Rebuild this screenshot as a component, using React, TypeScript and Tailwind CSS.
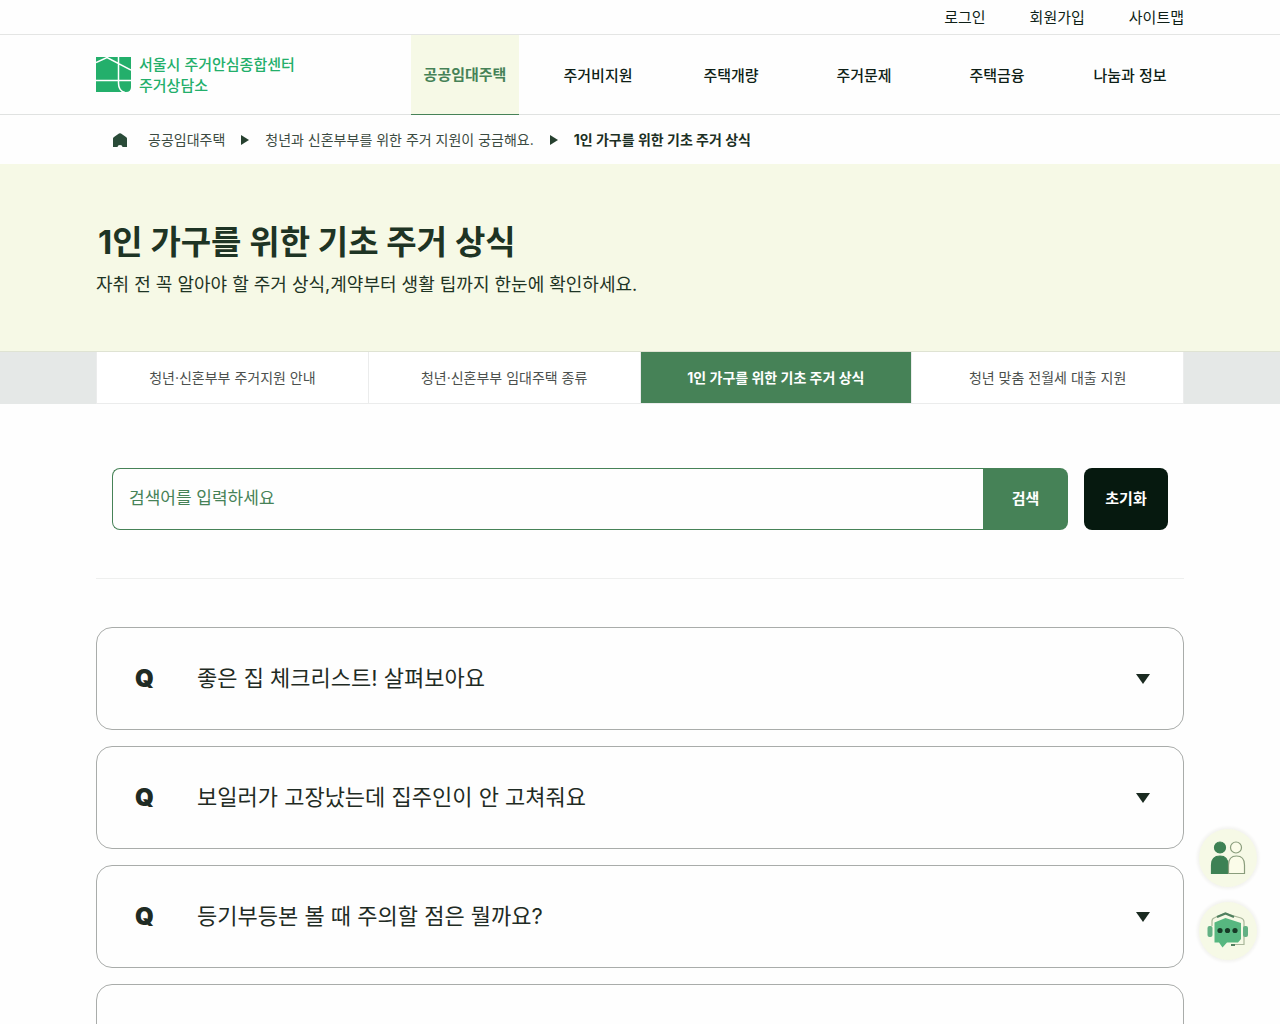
import React, { useState } from 'react';

const utilityLinks = ['로그인', '회원가입', '사이트맵'];

const menuItems = ['공공임대주택', '주거비지원', '주택개량', '주거문제', '주택금융', '나눔과 정보'];

const tabs = [
  '청년·신혼부부 주거지원 안내',
  '청년·신혼부부 임대주택 종류',
  '1인 가구를 위한 기초 주거 상식',
  '청년 맞춤 전월세 대출 지원',
];

const questions = [
  '좋은 집 체크리스트! 살펴보아요',
  '보일러가 고장났는데 집주인이 안 고쳐줘요',
  '등기부등본 볼 때 주의할 점은 뭘까요?',
  '',
];

const Logo: React.FC = () => (
  <a href="#" className="flex items-center gap-2 text-[#23af6b]">
    <svg viewBox="0 0 35 35" className="h-[35px] w-[35px]">
      <path d="M0 0H35V30Q35 35 30 35H0Z" fill="currentColor" />
      <path d="M0 5.500L11 0.500L35 13M22.500 0V26Q22.500 34 29 35.500M0 23.500H35" fill="none" stroke="#fff" strokeWidth="1.500" />
    </svg>
    <span className="text-[15px] leading-[21px] font-medium">
      서울시 주거안심종합센터
      <br />
      주거상담소
    </span>
  </a>
);

const CrumbArrow: React.FC = () => (
  <svg viewBox="0 0 8 10" className="h-[10px] w-2 shrink-0" fill="#26402f">
    <path d="M0 0L8 5L0 10Z" />
  </svg>
);

const PeopleIcon: React.FC = () => (
  <svg viewBox="0 0 36 34" className="h-[34px] w-9" strokeWidth="1.200">
    <g fill="#3d8154" stroke="#3d8154">
      <circle cx="10" cy="6.500" r="5.500" />
      <path d="M1.500 32.500V24Q1.500 15 10 15Q18 15 18 24V32.500Z" />
    </g>
    <g fill="#fbfce9" stroke="#8a9d7c">
      <circle cx="26" cy="6.500" r="5.500" />
      <path d="M18.500 32.500V24Q18.500 15 26.500 15Q34.500 15 34.500 24V32.500Z" />
    </g>
  </svg>
);

const ChatIcon: React.FC = () => (
  <svg viewBox="0 0 42 38" className="h-[38px] w-[42px]">
    <path d="M5 14V9Q5 6.500 8 5.500L18 1.500L34 6Q37 7 37 10V32.500H24" fill="none" stroke="#a9b79a" strokeWidth="1.200" />
    <rect x="0.500" y="14" width="5" height="11" rx="2" fill="#63b184" />
    <rect x="36" y="14" width="5" height="11" rx="2" fill="#63b184" />
    <path d="M10 5L18.500 1.500L27 5" fill="none" stroke="#50805f" strokeWidth="2.200" />
    <path d="M24 33H28" stroke="#50805f" strokeWidth="2" />
    <path d="M7.500 10.500L18.500 6L34 11V27L31 30.500H20L15.500 35.500L12 30.500H7.500Z" fill="#57b780" />
    <g fill="#173a26">
      <circle cx="13" cy="18.500" r="2.600" />
      <circle cx="20.500" cy="18.500" r="2.600" />
      <circle cx="28" cy="18.500" r="2.600" />
    </g>
  </svg>
);

const App: React.FC = () => {
  const [keyword, setKeyword] = useState('');

  return (
    <div className="min-h-screen bg-[#fefefe] font-['Inter','Noto_Sans_CJK_KR',sans-serif] text-[15px] text-[#0f1f17]">
      <div className="border-b border-[#e4e5e4]">
        <div className="mx-auto flex h-[34px] max-w-7xl items-center justify-end gap-11 px-24 pt-0.5">
          {utilityLinks.map((label) => (
            <a key={label} href="#">{label}</a>
          ))}
        </div>
      </div>

      <header className="border-b border-[#e0e2e1]">
        <div className="mx-auto flex h-[79px] max-w-7xl items-center justify-between px-24">
          <Logo />
          <nav className="-mb-px flex h-20 gap-[25px] font-medium">
            {menuItems.map((label, i) => (
              <a
                key={label}
                href="#"
                className={`flex w-[108px] items-center justify-center pt-0.5 whitespace-nowrap ${
                  i === 0 ? 'border-b border-[#468257] bg-[#f6f9e6] font-bold text-[#468257]' : ''
                }`}
              >
                {label}
              </a>
            ))}
          </nav>
        </div>
      </header>

      <nav className="mx-auto flex h-[49px] max-w-7xl items-center gap-4 px-28 text-[14px] text-[#3b4a41]">
        <a href="#" aria-label="홈" className="mr-1">
          <svg viewBox="0 0 16 14" className="h-[14px] w-4" fill="#2a4b38">
            <path d="M1 5.500Q1 4.500 2 4L7 0.500Q8 0 9 0.500L14 4Q15 4.500 15 5.500V14H10.500Q10.500 12 8 12Q5.500 12 5.500 14H1Z" />
          </svg>
        </a>
        <a href="#">공공임대주택</a>
        <CrumbArrow />
        <a href="#">청년과 신혼부부를 위한 주거 지원이 궁금해요.</a>
        <CrumbArrow />
        <strong className="font-bold text-[#1c2f24]">1인 가구를 위한 기초 주거 상식</strong>
      </nav>

      <section className="border-b border-[#dfe3d3] bg-[#f6f9e6]">
        <div className="mx-auto h-[187px] max-w-7xl px-24 pt-[55px] text-[#1e3424]">
          <h1 className="pl-0.5 text-[33px] leading-[46px] font-bold">1인 가구를 위한 기초 주거 상식</h1>
          <p className="mt-1 text-[18px] leading-8">
            자취 전 꼭 알아야 할 주거 상식,계약부터 생활 팁까지 한눈에 확인하세요.
          </p>
        </div>
      </section>

      <div className="bg-[#e5e8e7]">
        <div className="mx-auto max-w-7xl px-24">
          <nav className="grid h-[52px] grid-cols-4 border-b border-l border-[#ebecec] bg-white text-[14px] text-[#4b504d]">
            {tabs.map((label, i) => (
              <a
                key={label}
                href="#"
                className={`flex items-center justify-center border-r border-[#ebecec] ${
                  i === 2 ? 'bg-[#468257] font-bold text-white' : ''
                }`}
              >
                {label}
              </a>
            ))}
          </nav>
        </div>
      </div>

      <main className="mx-auto max-w-7xl px-24 pt-16">
        <form className="flex gap-4 border-b border-[#eeefee] px-4 pb-12" onSubmit={(e) => e.preventDefault()}>
          <div className="flex h-[62px] flex-1">
            <input
              type="text"
              aria-label="검색어"
              placeholder="검색어를 입력하세요"
              value={keyword}
              onChange={(e) => setKeyword(e.target.value)}
              className="min-w-0 flex-1 rounded-l-lg border border-r-0 border-[#468257] px-4 text-[17px] placeholder:text-[#468257]"
            />
            <button type="submit" className="w-[85px] rounded-r-lg bg-[#468257] font-bold text-white">
              검색
            </button>
          </div>
          <button
            type="button"
            onClick={() => setKeyword('')}
            className="w-[84px] rounded-lg bg-[#06190f] font-bold text-white"
          >
            초기화
          </button>
        </form>

        <ul className="mt-12 flex flex-col gap-4">
          {questions.map((question, i) => (
            <li key={i}>
              <button
                type="button"
                className="flex h-[103px] w-full items-center rounded-2xl border border-[#a9acaa] pr-[33px] pl-[38px] text-left text-[22px] text-[#1f2b24]"
              >
                <span className="w-[62px] text-[24px] leading-5 font-black">Q</span>
                <span className="flex-1">{question}</span>
                <svg viewBox="0 0 14 10" className="h-[10px] w-[14px]" fill="#1a2a20">
                  <path d="M0 0H14L7 10Z" />
                </svg>
              </button>
            </li>
          ))}
        </ul>
      </main>

      <div className="fixed right-[23px] bottom-16 flex flex-col gap-[15px]">
        <button
          type="button"
          aria-label="상담"
          className="flex h-[58px] w-[58px] items-center justify-center rounded-full bg-[#f6f9e6] shadow-[0_0_3px_2px_#f3f3f0]"
        >
          <PeopleIcon />
        </button>
        <button
          type="button"
          aria-label="챗봇"
          className="flex h-[58px] w-[58px] items-center justify-center rounded-full bg-[#f6f9e6] shadow-[0_0_3px_2px_#f3f3f0]"
        >
          <ChatIcon />
        </button>
      </div>
    </div>
  );
};

export default App;
